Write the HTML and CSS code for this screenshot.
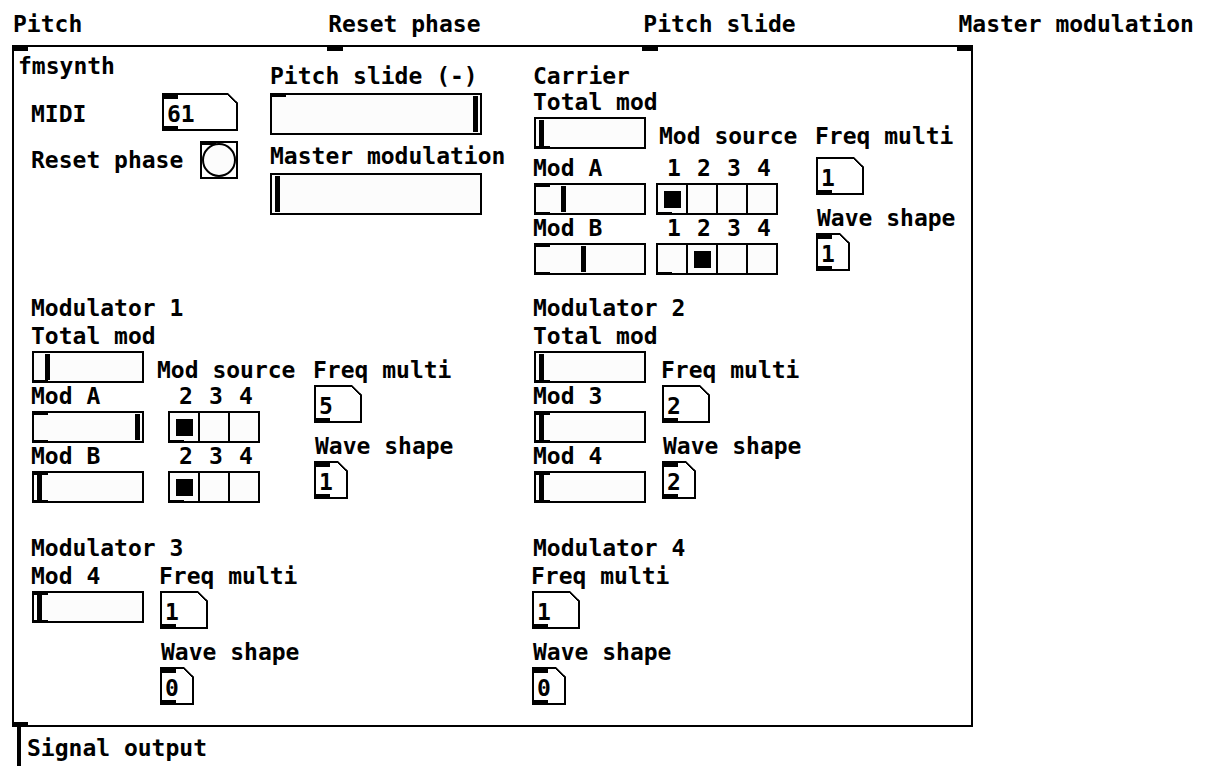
FILE: index.html
```html
<!DOCTYPE html>
<html lang="en">
<head>
<meta charset="utf-8">
<title>fmsynth</title>
<link rel="stylesheet" href="styles.css">
</head>
<body>
<div class="rack">
  <header class="inlet-labels">
    <span>Pitch</span><span>Reset phase</span><span>Pitch slide</span><span>Master modulation</span>
  </header>
  <main class="patch">
    <div class="inlets"><i></i><i></i><i></i><i></i></div>
    <div class="outlet"></div>

    <section class="master">
      <div class="voice">
        <h1>fmsynth</h1>
        <div class="line"><label for="midi">MIDI</label><input class="num wide both" id="midi" inputmode="numeric" value="61"></div>
        <div class="line"><label for="bang">Reset phase</label><button class="bang" id="bang" type="button" aria-label="Reset phase"><svg viewBox="0 0 34 34"><circle cx="17" cy="17" r="16"/></svg></button></div>
      </div>
      <div class="globals">
        <label for="slide">Pitch slide (-)</label>
        <input class="slider large in" id="slide" type="range" min="0" max="198" value="198">
        <label for="master">Master modulation</label>
        <input class="slider large" id="master" type="range" min="0" max="198" value="0">
      </div>
    </section>

    <section class="module carrier">
      <h2>Carrier</h2>
      <div class="controls">
        <div class="faders">
          <label for="c-total">Total mod</label>
          <input class="slider out" id="c-total" type="range" min="0" max="98" value="0">
          <label for="c-a">Mod A</label>
          <input class="slider in out" id="c-a" type="range" min="0" max="98" value="22">
          <label for="c-b">Mod B</label>
          <input class="slider in out" id="c-b" type="range" min="0" max="98" value="42">
        </div>
        <div class="sources">
          <h3>Mod source</h3>
          <div class="radios" role="radiogroup" aria-label="Mod A source">
            <label>1<input type="radio" name="ca" checked></label><label>2<input type="radio" name="ca"></label><label>3<input type="radio" name="ca"></label><label>4<input type="radio" name="ca"></label>
          </div>
          <div class="radios" role="radiogroup" aria-label="Mod B source">
            <label>1<input type="radio" name="cb"></label><label>2<input type="radio" name="cb" checked></label><label>3<input type="radio" name="cb"></label><label>4<input type="radio" name="cb"></label>
          </div>
        </div>
        <div class="numbers">
          <label for="c-freq">Freq multi</label>
          <input class="num" id="c-freq" inputmode="numeric" value="1">
          <label class="wave" for="c-wave">Wave shape</label>
          <input class="num narrow both" id="c-wave" inputmode="numeric" value="1">
        </div>
      </div>
    </section>

    <section class="module">
      <h2>Modulator 1</h2>
      <div class="controls">
        <div class="faders">
          <label for="m1-total">Total mod</label>
          <input class="slider out" id="m1-total" type="range" min="0" max="98" value="8">
          <label for="m1-a">Mod A</label>
          <input class="slider in out" id="m1-a" type="range" min="0" max="98" value="98">
          <label for="m1-b">Mod B</label>
          <input class="slider in out" id="m1-b" type="range" min="0" max="98" value="0">
        </div>
        <div class="sources three">
          <h3>Mod source</h3>
          <div class="radios" role="radiogroup" aria-label="Mod A source">
            <label>2<input type="radio" name="m1a" checked></label><label>3<input type="radio" name="m1a"></label><label>4<input type="radio" name="m1a"></label>
          </div>
          <div class="radios" role="radiogroup" aria-label="Mod B source">
            <label>2<input type="radio" name="m1b" checked></label><label>3<input type="radio" name="m1b"></label><label>4<input type="radio" name="m1b"></label>
          </div>
        </div>
        <div class="numbers">
          <label for="m1-freq">Freq multi</label>
          <input class="num" id="m1-freq" inputmode="numeric" value="5">
          <label class="wave" for="m1-wave">Wave shape</label>
          <input class="num narrow both" id="m1-wave" inputmode="numeric" value="1">
        </div>
      </div>
    </section>

    <section class="module">
      <h2>Modulator 2</h2>
      <div class="controls">
        <div class="faders">
          <label for="m2-total">Total mod</label>
          <input class="slider out" id="m2-total" type="range" min="0" max="98" value="0">
          <label for="m2-3">Mod 3</label>
          <input class="slider in out" id="m2-3" type="range" min="0" max="98" value="0">
          <label for="m2-4">Mod 4</label>
          <input class="slider in out" id="m2-4" type="range" min="0" max="98" value="0">
        </div>
        <div class="numbers">
          <label for="m2-freq">Freq multi</label>
          <input class="num" id="m2-freq" inputmode="numeric" value="2">
          <label class="wave" for="m2-wave">Wave shape</label>
          <input class="num narrow both" id="m2-wave" inputmode="numeric" value="2">
        </div>
      </div>
    </section>

    <section class="module simple">
      <h2>Modulator 3</h2>
      <div class="controls">
        <div class="faders">
          <label for="m3-4">Mod 4</label>
          <input class="slider in out" id="m3-4" type="range" min="0" max="98" value="0">
        </div>
        <div class="numbers">
          <label for="m3-freq">Freq multi</label>
          <input class="num" id="m3-freq" inputmode="numeric" value="1">
          <label class="wave" for="m3-wave">Wave shape</label>
          <input class="num narrow both" id="m3-wave" inputmode="numeric" value="0">
        </div>
      </div>
    </section>

    <section class="module simple">
      <h2>Modulator 4</h2>
      <div class="controls">
        <div class="numbers">
          <label for="m4-freq">Freq multi</label>
          <input class="num" id="m4-freq" inputmode="numeric" value="1">
          <label class="wave" for="m4-wave">Wave shape</label>
          <input class="num narrow both" id="m4-wave" inputmode="numeric" value="0">
        </div>
      </div>
    </section>
  </main>
  <footer class="signal">Signal output</footer>
</div>
</body>
</html>
```
FILE: styles.css
```css
:root {
  --ink: #000;
  --field: #fcfcfc;
  --nub: linear-gradient(var(--ink), var(--ink));
}

* { box-sizing: border-box; }

body {
  margin: 0;
  background: #fff;
  color: var(--ink);
  font: bold 23px/26px "DejaVu Sans Mono", monospace;
  white-space: nowrap;
}

h1, h2, h3 { margin: 0; font: inherit; }

input, button {
  display: block;
  margin: 0;
  color: inherit;
  font: inherit;
  appearance: none;
  border: 2px solid var(--ink);
  border-radius: 0;
}

label { display: block; }

.rack {
  display: flex;
  flex-direction: column;
  width: fit-content;
  min-height: 100vh;
  padding: 11px 0 0 12px;
}

.inlet-labels {
  display: flex;
  justify-content: space-between;
  margin-bottom: 8px;
}

.inlet-labels span { width: 16px; padding-left: 1px; }

/* Patch frame with its inlets and outlet */
.patch {
  position: relative;
  display: grid;
  grid-template-columns: 514px auto;
  row-gap: 20px;
  padding: 6px 16px 8px 4px;
  border: 2px solid var(--ink);
}

.inlets {
  position: absolute;
  inset: -2px -2px auto;
  display: flex;
  justify-content: space-between;
}

.inlets i { width: 16px; height: 6px; background: var(--ink); }

.outlet {
  position: absolute;
  left: -2px;
  bottom: -2px;
  width: 16px;
  height: 5px;
  background: var(--ink);
}

.master { display: flex; gap: 32px; }

.voice { width: 220px; }

.voice h1 { margin-bottom: 14px; }

.line {
  display: flex;
  justify-content: space-between;
  align-items: baseline;
  padding-left: 13px;
  margin-bottom: 10px;
}

.line:last-child { align-items: center; }

.globals { padding-top: 10px; }

.globals .slider { margin: 4px 0 8px; }

/* Modules */
.module { padding: 0 0 12px 12px; }

.module:nth-of-type(even) { padding-left: 0; }

.module h2 { margin-bottom: 2px; }

.module h2, .faders label, .numbers label { padding-left: 1px; }

.controls { display: flex; }

.faders { width: 124px; }

.faders .slider { margin: 2px 0 0 2px; }

.sources { width: 158px; padding-top: 34px; }

.sources h3 { padding-left: 3px; }

.three .radios { margin-left: 14px; }

.numbers { padding-top: 34px; }

.simple .numbers { padding-top: 0; }

.faders + .numbers { margin-left: 4px; }

.numbers:first-child { margin-left: -2px; }

.numbers .num { margin: 2px 0 10px 2px; }

.numbers .num:last-child { margin-bottom: 0; }

.numbers .wave { padding-left: 3px; }

.carrier { padding-top: 10px; padding-bottom: 0; }

.carrier h2 { margin-bottom: 0; }

.carrier .slider:first-of-type, .carrier h3 { margin-bottom: 6px; }

.carrier .num:first-of-type { margin-top: 8px; }

/* Slider */
.slider {
  width: 112px;
  height: 32px;
  padding: 1px 2px 1px 3px;
  background-color: var(--field);
  background-repeat: no-repeat;
}

.slider.large { width: 212px; height: 42px; }

.slider.in {
  background-image: var(--nub);
  background-position: 0 0;
  background-size: 14px 2px;
}

.slider.out {
  background-image: var(--nub);
  background-position: 0 100%;
  background-size: 14px 1px;
}

.slider.in.out {
  background-image: var(--nub), var(--nub);
  background-position: 0 0, 0 100%;
  background-size: 14px 2px, 14px 1px;
}

.slider::-webkit-slider-runnable-track { height: 100%; }

.slider::-webkit-slider-thumb {
  appearance: none;
  width: 5px;
  height: 26px;
  background: var(--ink);
}

.slider.large::-webkit-slider-thumb { height: 36px; }

.slider::-moz-range-thumb {
  width: 5px;
  height: 100%;
  border: 0;
  border-radius: 0;
  background: var(--ink);
}

/* Number box with a cut corner */
.num {
  width: 48px;
  height: 38px;
  padding: 6px 0 2px 3px;
  background-color: #fff;
  background-image: linear-gradient(45deg, transparent calc(50% - 2px), var(--ink) calc(50% - 2px)), var(--nub);
  background-origin: border-box;
  background-position: 100% 0, 0 100%;
  background-size: 10px 10px, 16px 5px;
  background-repeat: no-repeat;
  clip-path: polygon(0 0, calc(100% - 10px) 0, 100% 10px, 100% 100%, 0 100%);
}

.num.wide { width: 76px; }

.num.narrow { width: 34px; }

.num.both {
  background-image: linear-gradient(45deg, transparent calc(50% - 2px), var(--ink) calc(50% - 2px)), var(--nub), var(--nub);
  background-position: 100% 0, 0 100%, 0 0;
  background-size: 10px 10px, 16px 5px, 16px 6px;
}

/* Bang */
.bang {
  width: 38px;
  height: 38px;
  padding: 0;
  background: var(--nub) 0 0 / 14px 2px no-repeat #fff;
}

.bang svg { display: block; }

.bang circle { fill: var(--field); stroke: var(--ink); stroke-width: 2; }

/* Radio strip */
.radios { display: flex; }

.radios label { width: 30px; text-indent: 11px; }

.radios input {
  width: 32px;
  height: 32px;
  margin-top: 2px;
  background-color: var(--field);
  background-repeat: no-repeat;
}

.radios input:checked {
  background-image: var(--nub);
  background-position: 6px 6px;
  background-size: 17px 17px;
}

.radios label:first-child input {
  background-image: var(--nub);
  background-position: 0 100%;
  background-size: 14px 1px;
}

.radios label:first-child input:checked {
  background-image: var(--nub), var(--nub);
  background-position: 0 100%, 6px 6px;
  background-size: 14px 1px, 17px 17px;
}

/* Signal cord leaving the outlet */
.signal {
  flex: 1;
  margin-left: 5px;
  padding: 8px 0 5px 6px;
  border-left: 4px solid var(--ink);
}
```
